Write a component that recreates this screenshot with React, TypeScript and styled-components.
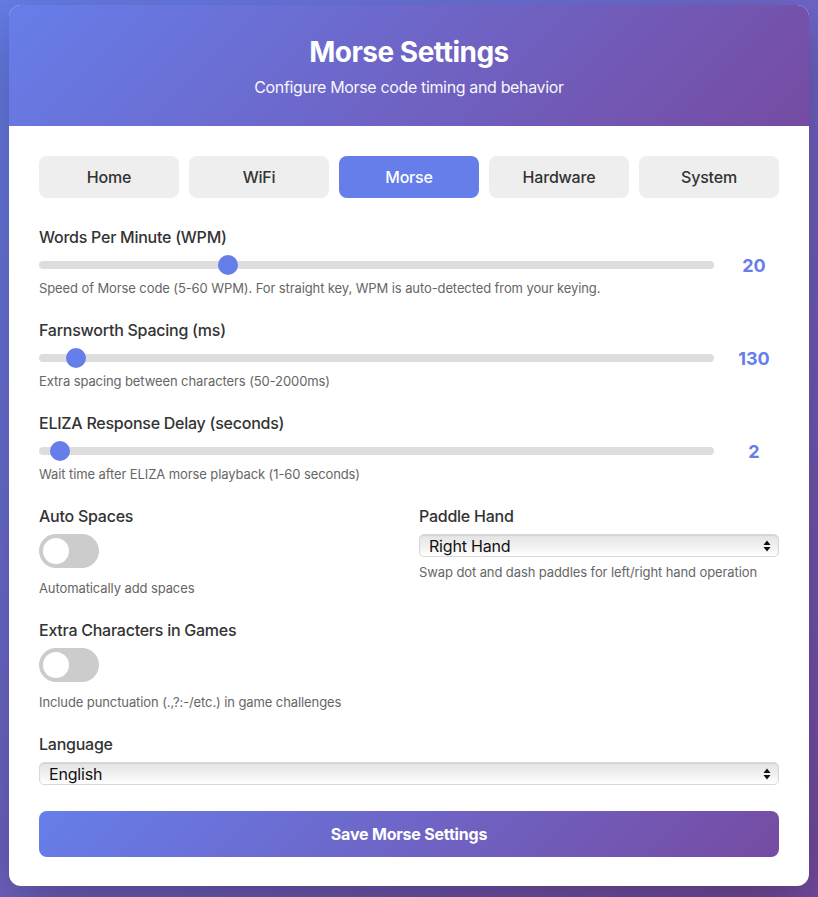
import React, { useState } from "react";
import styled, { createGlobalStyle } from "styled-components";

const GlobalStyle = createGlobalStyle`
  * { box-sizing: border-box; }
  html, body { margin: 0; padding: 0; }
  body {
    font-family: Inter, "Noto Sans", "Liberation Sans", sans-serif;
    background: linear-gradient(135deg, #667eea 0%, #764ba2 100%);
    min-height: 897px;
    padding: 5px 9px 11px;
  }
`;

const Card = styled.div`
  max-width: 800px;
  margin: 0 auto;
  background: #fff;
  border-radius: 12px;
  overflow: hidden;
  box-shadow: 0 20px 60px rgba(0, 0, 0, 0.3);
`;

const Header = styled.div`
  background: linear-gradient(135deg, #667eea 0%, #764ba2 100%);
  color: #fff;
  text-align: center;
  padding: 30px 20px 29px;
`;

const Title = styled.h1`
  margin: 0 0 8px;
  font-size: 28px;
  line-height: 34px;
  font-weight: 700;
  letter-spacing: -0.5px;
`;

const Subtitle = styled.p`
  margin: 0;
  font-size: 16px;
  line-height: 20px;
  letter-spacing: -0.35px;
  opacity: 0.95;
`;

const Content = styled.div`
  padding: 30px 30px 29px;
`;

const Tabs = styled.div`
  display: grid;
  grid-template-columns: repeat(5, 1fr);
  gap: 10px;
  margin-bottom: 30px;
`;

const Tab = styled.button<{ $active?: boolean }>`
  height: 42px;
  border: none;
  border-radius: 8px;
  font-family: inherit;
  font-size: 16px;
  font-weight: 500;
  letter-spacing: -0.2px;
  background: ${(p) => (p.$active ? "#667eea" : "#eeeeee")};
  color: ${(p) => (p.$active ? "#fff" : "#333")};
  cursor: pointer;
`;

const Group = styled.div`
  margin-bottom: 25px;
`;

const Label = styled.div`
  font-size: 16px;
  line-height: 19px;
  font-weight: 500;
  letter-spacing: -0.25px;
  color: #333;
  margin-bottom: 8px;
`;

const SliderRow = styled.div`
  display: flex;
  align-items: center;
  gap: 15px;
  height: 20px;
`;

const Track = styled.div`
  position: relative;
  flex: 1;
  height: 8px;
  border-radius: 4px;
  background: #dddddd;
`;

const Thumb = styled.div`
  position: absolute;
  top: 50%;
  width: 20px;
  height: 20px;
  margin-top: -10px;
  margin-left: -10px;
  border-radius: 50%;
  background: #667eea;
`;

const Value = styled.div`
  width: 50px;
  text-align: center;
  font-size: 18px;
  font-weight: 700;
  color: #667eea;
`;

const Desc = styled.div<{ $mt?: number }>`
  font-size: 13px;
  line-height: 16px;
  letter-spacing: -0.1px;
  color: #666;
  margin-top: ${(p) => p.$mt ?? 5}px;
`;

const Columns = styled.div`
  display: grid;
  grid-template-columns: 1fr 1fr;
  gap: 20px;
`;

const Toggle = styled.div<{ $on?: boolean }>`
  position: relative;
  width: 60px;
  height: 34px;
  border-radius: 17px;
  background: ${(p) => (p.$on ? "#667eea" : "#cccccc")};
  &::after {
    content: "";
    position: absolute;
    top: 4px;
    left: ${(p) => (p.$on ? "30px" : "4px")};
    width: 26px;
    height: 26px;
    border-radius: 50%;
    background: #fff;
  }
`;

const SelectWrap = styled.div`
  position: relative;
  height: 23px;
`;

const Select = styled.select`
  appearance: none;
  -webkit-appearance: none;
  width: 100%;
  height: 23px;
  padding: 0 24px 0 9px;
  font-family: inherit;
  font-size: 16px;
  letter-spacing: -0.2px;
  color: #111;
  border: 1px solid #d8d8d8;
  border-radius: 5px;
  background: linear-gradient(#e4e4e4, #f2f2f2 60%, #ffffff);
  box-shadow: inset 0 1px 1px rgba(0, 0, 0, 0.08);
  outline: none;
`;

const Arrows = styled.svg`
  position: absolute;
  right: 8px;
  top: 6px;
  pointer-events: none;
`;

const SaveButton = styled.button`
  width: 100%;
  height: 46px;
  margin-top: 1px;
  border: none;
  border-radius: 8px;
  background: linear-gradient(135deg, #667eea 0%, #764ba2 100%);
  color: #fff;
  font-family: inherit;
  font-size: 16px;
  font-weight: 700;
  letter-spacing: -0.2px;
  cursor: pointer;
`;

type SliderProps = { label: string; value: number; min: number; max: number; desc: string };

function Slider({ label, value, min, max, desc }: SliderProps) {
  const frac = (value - min) / (max - min);
  return (
    <Group>
      <Label>{label}</Label>
      <SliderRow>
        <Track>
          <Thumb style={{ left: `calc(10px + (100% - 20px) * ${frac})` }} />
        </Track>
        <Value>{value}</Value>
      </SliderRow>
      <Desc>{desc}</Desc>
    </Group>
  );
}

function NativeSelect({ value, options }: { value: string; options: string[] }) {
  return (
    <SelectWrap>
      <Select defaultValue={value}>
        {options.map((o) => (
          <option key={o}>{o}</option>
        ))}
      </Select>
      <Arrows width="8" height="12" viewBox="0 0 8 12">
        <path d="M4 0.5 L7.5 5 H0.5 Z" fill="#111" />
        <path d="M4 11.5 L7.5 7 H0.5 Z" fill="#111" />
      </Arrows>
    </SelectWrap>
  );
}

export default function App() {
  const [tab, setTab] = useState("Morse");
  const tabs = ["Home", "WiFi", "Morse", "Hardware", "System"];
  return (
    <>
      <GlobalStyle />
      <Card>
        <Header>
          <Title>Morse Settings</Title>
          <Subtitle>Configure Morse code timing and behavior</Subtitle>
        </Header>
        <Content>
          <Tabs>
            {tabs.map((t) => (
              <Tab key={t} $active={t === tab} onClick={() => setTab(t)}>
                {t}
              </Tab>
            ))}
          </Tabs>
          <Slider
            label="Words Per Minute (WPM)"
            value={20}
            min={5}
            max={60}
            desc="Speed of Morse code (5-60 WPM). For straight key, WPM is auto-detected from your keying."
          />
          <Slider
            label="Farnsworth Spacing (ms)"
            value={130}
            min={50}
            max={2000}
            desc="Extra spacing between characters (50-2000ms)"
          />
          <Slider
            label="ELIZA Response Delay (seconds)"
            value={2}
            min={1}
            max={60}
            desc="Wait time after ELIZA morse playback (1-60 seconds)"
          />
          <Columns>
            <Group>
              <Label>Auto Spaces</Label>
              <Toggle />
              <Desc $mt={12}>Automatically add spaces</Desc>
            </Group>
            <Group>
              <Label>Paddle Hand</Label>
              <NativeSelect value="Right Hand" options={["Right Hand", "Left Hand"]} />
              <Desc $mt={7}>Swap dot and dash paddles for left/right hand operation</Desc>
            </Group>
          </Columns>
          <Group>
            <Label>Extra Characters in Games</Label>
            <Toggle />
            <Desc $mt={12}>Include punctuation (.,?:-/etc.) in game challenges</Desc>
          </Group>
          <Group>
            <Label>Language</Label>
            <NativeSelect value="English" options={["English", "Deutsch", "Español", "Français"]} />
          </Group>
          <SaveButton>Save Morse Settings</SaveButton>
        </Content>
      </Card>
    </>
  );
}
